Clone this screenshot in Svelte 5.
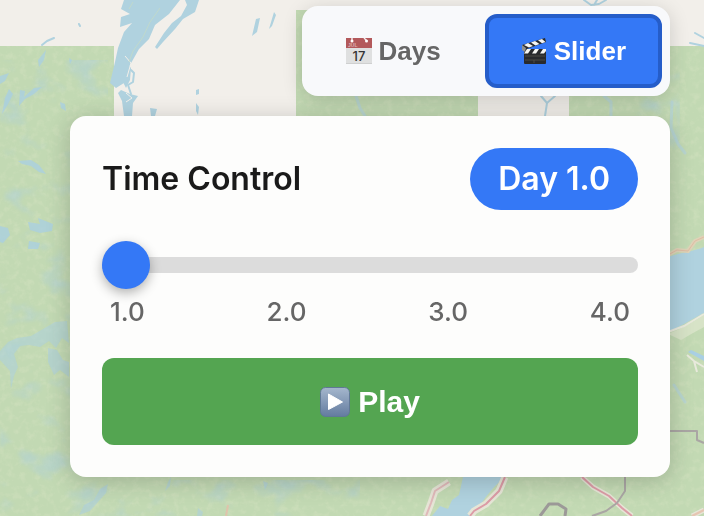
<script>
  let mode = $state('slider');
  let day = $state(1);
  const ticks = [1, 2, 3, 4];
</script>

<main class="page">
  <svg class="map" viewBox="0 0 704 516" preserveAspectRatio="xMidYMid slice" aria-hidden="true">
    <defs>
      <filter id="lakes" x="0" y="0" width="100%" height="100%" color-interpolation-filters="sRGB">
        <feTurbulence type="fractalNoise" baseFrequency="0.03 0.04" numOctaves="4" seed="21" />
        <feColorMatrix values="0 0 0 0 0.67  0 0 0 0 0.81  0 0 0 0 0.87  4 0 0 0 -2.2" />
        <feGaussianBlur stdDeviation=".8" />
        <feComposite in2="SourceGraphic" operator="in" />
      </filter>
      <filter id="grain" x="0" y="0" width="100%" height="100%" color-interpolation-filters="sRGB">
        <feTurbulence type="fractalNoise" baseFrequency="0.15" numOctaves="3" seed="4" />
        <feColorMatrix values="0 0 0 0 0.84  0 0 0 0 0.89  0 0 0 0 0.76  0 3 0 0 -1.4" />
        <feComposite in2="SourceGraphic" operator="in" />
      </filter>
      <filter id="soft" x="0" y="0" width="100%" height="100%">
        <feGaussianBlur stdDeviation=".7" />
      </filter>
    </defs>
    <rect width="704" height="516" fill="#f2efea" />
    <g fill="#c2d9b3">
      <path d="M0 46H114V116L122 200H296V10H478V150H569V46H704V516H0Z" />
    </g>
    <g filter="url(#grain)" opacity=".4">
      <path d="M0 46H114V516H0ZM296 10H478V120H296ZM569 46H704V516H569ZM60 470H600V516H60Z" />
    </g>
    <g filter="url(#lakes)" opacity=".45">
      <path d="M0 60H108V516H0ZM60 480H360V516H60ZM590 50H680V150H590Z" />
    </g>

    <g filter="url(#soft)">
      <g fill="#a9cfe3" opacity=".75">
        <path d="M0 76L9 73L5 81L0 84ZM9 89L13 94L7 106L2 114L5 98ZM20 90L25 91L24 97L34 88L42 87L34 94L25 99L19 106ZM60 102L65 104L66 111L61 108ZM18 161L31 160L39 165L46 174L39 172L31 166L22 164ZM0 226L8 228L10 235L3 243L0 242ZM28 222L40 224L38 218L53 224L52 231L40 233L30 230ZM29 241L40 243L38 249L28 249ZM69 58L72 60L70 64ZM38 60L46 50L44 60L39 67Z" />
        <path d="M0 351L8 342L17 338L31 336L43 329L55 322L67 321L69 343L62 338L56 348L49 341L40 347L29 345L20 346L14 354L18 367L14 376L11 389L10 371L0 360Z" opacity=".65" />
        <path d="M48 348L57 350L63 360L69 362V377L60 370L54 375L48 362ZM100 489L108 484L106 493L98 502L90 511L79 515L84 505L94 500ZM168 482L171 477L170 486L165 491ZM263 481L268 483L265 490ZM198 508L203 512L202 516H197Z" opacity=".7" />
      </g>

      <g fill="#b0d2df">
        <path d="M124 0L180 0L169 14L155 25L149 39L139 49L130 65L124 83L116 88L110 83L115 62L118 48L124 32L132 23L120 27L121 17L130 14L121 9Z" />
        <path d="M185 0H199L195 12L183 19L175 29L163 42L157 49L155 47L164 33L172 23L181 16L187 5Z" />
        <path d="M126 61L131 68L130 80L126 88L123 82L126 74ZM121 90L130 94L138 96L133 103L132 116H124L122 101L118 93Z" />
        <path d="M256 19L260 18L257 32L252 36ZM274 12L276 15L272 26L269 29ZM150 108L157 109L155 116H151ZM196 90L199 89L199 94L196 95ZM196 103L199 107L198 115L196 111Z" />
        <path d="M704 247C692 252 682 252 668 257V332C682 326 692 319 704 313Z" />
        <path d="M463 477H505C493 487 483 499 474 516H432L440 506L448 509L452 500L459 495Z" />
      </g>
      <g fill="none" stroke="#f2efe9" stroke-width="1">
        <path d="M125 56L131 63L127 77M126 93L132 98L126 102" />
      </g>
      <path d="M160 8L150 22L143 37L133 51L129 62M133 2L129 9" fill="none" stroke="#c0d9cc" stroke-width="1" />
      <g fill="none" stroke="#b0d2df" stroke-linecap="round" stroke-linejoin="round">
        <path d="M42 45L47 41L54 38M79 24L80 26M131 94L128 85L133 82L134 73L131 70M584 0L591 5L599 4L606 0M597 0L594 5M695 33L704 38M541 96L547 103L545 116M555 96L547 103M690 43L704 46" stroke-width="2" />
        <path d="M604 96L611 102V116M672 102L671 128L678 144L685 153M674 385L685 402M356 96L360 108L365 116" stroke-width="3" opacity=".6" />
      </g>
      <path d="M668 334C680 329 690 324 704 315V327L693 333L681 340Z" fill="#d7e3c7" />
      <path d="M668 332L684 326L704 314M687 355L694 361L704 367M694 361L697 372" fill="none" stroke="#e8e9dc" stroke-width="2" />
      <path d="M691 350L704 356V361L688 352Z" fill="#a9cfe3" />
      <g fill="none" stroke-linejoin="round">
        <path d="M668 255L677 250L688 251L695 241L704 237" stroke="#dfd3b8" stroke-width="4" />
        <path d="M668 255L677 250L688 251L695 241L704 237" stroke="#e0bda4" stroke-width="1" />
        <g stroke="#e6e5d6" stroke-width="7">
          <path d="M505 477L499 491L486 504L474 511L470 516" />
          <path d="M449 482L435 491L431 503L426 516" />
          <path d="M582 477L593 487L609 496L622 508L632 516M704 510L692 516" stroke-width="5" />
        </g>
        <g stroke="#dc9ba6" stroke-width="2">
          <path d="M505 477L499 491L486 504L474 511L470 516" />
          <path d="M449 482L435 491L431 503L426 516" opacity=".6" />
          <path d="M582 477L593 487L609 496L622 508L632 516" />
          <path d="M704 510L692 516M226 516L228 505" stroke="#e6bda9" opacity=".8" />
        </g>
        <path d="M670 431H697V440L704 443M625 477V491L617 503L606 511L592 516" stroke="#aaa6a4" stroke-width="2" />
        <path d="M540 516L549 504L558 504L566 509L565 516" stroke="#9c9998" stroke-width="3" />
      </g>
    </g>
  </svg>

  <div class="controls">
    <div class="modes" role="group" aria-label="View mode">
      <button type="button" class="mode" class:active={mode === 'days'} onclick={() => (mode = 'days')}>
        <svg class="emoji" viewBox="0 0 26 26" aria-hidden="true">
          <rect width="26" height="26" fill="#dfe0e0" />
          <rect width="26" height="10" fill="#b3595b" />
          <path d="M0 25H26V26H0Z" fill="#cfd0d0" />
          <path d="M6 0V3M18 0L21 3" stroke="#f7eeee" stroke-width="1.4" />
          <circle cx="6" cy="3" r="1.5" fill="#fff" />
          <circle cx="20.5" cy="3" r="1.5" fill="#fff" />
          <text x="2" y="9" font-family="Liberation Sans, sans-serif" font-size="5" fill="#dcb0b0">JUL</text>
          <text x="13" y="23" text-anchor="middle" font-family="Inter, sans-serif" font-size="13" font-weight="500" fill="#333">17</text>
        </svg>
        <span>Days</span>
      </button>
      <button type="button" class="mode" class:active={mode === 'slider'} onclick={() => (mode = 'slider')}>
        <svg class="emoji" viewBox="0 0 26 26" aria-hidden="true">
          <path d="M1 7L24 0L25 4L3 12Z" fill="#292a2c" />
          <path d="M3 7L7 5L12 8L8 9.5ZM10 4.500L14 3L18.500 6L14.500 7.500ZM17 2.300L21 1L24.500 4L21 5.300Z" fill="#f5f5f2" />
          <rect x="3" y="11" width="22" height="15" rx="1" fill="#292a2c" />
          <path d="M6 11H10L7 15.500H3ZM14 11H18L15 15.500H11ZM22 11H25V13L23 15.500H19Z" fill="#f5f5f2" />
          <path d="M1 7L5 10L4 14L1 12Z" fill="#8f908f" />
          <path d="M4 18H24M4 22H24M13 22V25" stroke="#55534c" stroke-width=".8" />
        </svg>
        <span>Slider</span>
      </button>
    </div>

    <section class="card" aria-labelledby="time-title">
      <header>
        <h2 id="time-title">Time Control</h2>
        <output class="pill" for="day-range">Day {day.toFixed(1)}</output>
      </header>
      <input id="day-range" type="range" min="1" max="4" step="0.1" bind:value={day} aria-labelledby="time-title" />
      <div class="ticks">
        {#each ticks as tick}
          <span>{tick.toFixed(1)}</span>
        {/each}
      </div>
      <button type="button" class="play">
        <svg class="play-icon" viewBox="0 0 30 30" aria-hidden="true">
          <defs>
            <linearGradient id="key" x1="0" y1="0" x2="0" y2="1">
              <stop offset="0" stop-color="#a5b7cd" />
              <stop offset="1" stop-color="#637b9f" />
            </linearGradient>
          </defs>
          <rect x=".5" y=".5" width="29" height="29" rx="5" fill="url(#key)" stroke="#607995" />
          <path d="M8.500 7L22.500 15L8.500 22.500Z" fill="#fff" stroke="#fff" stroke-linejoin="round" />
        </svg>
        <span>Play</span>
      </button>
    </section>
  </div>
</main>

<style>
  :global(body) {
    margin: 0;
  }

  .page {
    position: relative;
    box-sizing: border-box;
    min-height: 100vh;
    padding: 6px 34px 39px 70px;
    overflow: hidden;
    font-family: Inter, 'Liberation Sans', sans-serif;
  }

  .map {
    position: absolute;
    inset: 0;
    width: 100%;
    height: 100%;
  }

  .controls {
    position: relative;
    display: flex;
    flex-direction: column;
    gap: 20px;
  }

  .modes {
    display: flex;
    align-self: flex-end;
    gap: 8px;
    padding: 8px;
    border-radius: 16px;
    background: #f8f9fb;
    box-shadow: 0 4px 20px rgba(0, 0, 0, 0.16);
  }

  button {
    display: flex;
    align-items: center;
    justify-content: center;
    border: 0;
    font-family: 'Liberation Sans', Arial, sans-serif;
    font-weight: 700;
    cursor: pointer;
  }

  .mode {
    gap: 7px;
    padding: 18px 32px;
    border: 4px solid transparent;
    border-radius: 12px;
    background: transparent;
    color: #666;
    font-size: 26px;
    line-height: 30px;
  }

  .mode.active {
    border-color: #255dc9;
    background: #3478f6;
    color: #fff;
  }

  .emoji {
    width: 26px;
    height: 26px;
  }

  .card {
    padding: 32px;
    border-radius: 16px;
    background: #fdfdfc;
    box-shadow: 0 4px 24px rgba(0, 0, 0, 0.2);
  }

  header {
    display: flex;
    align-items: center;
    justify-content: space-between;
  }

  h2 {
    margin: 0;
    color: #1a1a1a;
    font-size: 32px;
    font-weight: 600;
    line-height: 38px;
  }

  .pill {
    padding: 12px 28px;
    border-radius: 40px;
    background: #3478f6;
    color: #fff;
    font-size: 32px;
    font-weight: 600;
    line-height: 38px;
  }

  input {
    display: block;
    width: 100%;
    height: 48px;
    margin: 31px 0 8px;
    appearance: none;
    background: transparent;
    cursor: pointer;
  }

  input::-webkit-slider-runnable-track {
    height: 16px;
    border-radius: 8px;
    background: #dcdcdc;
  }

  input::-webkit-slider-thumb {
    width: 48px;
    height: 48px;
    margin-top: -16px;
    appearance: none;
    border-radius: 50%;
    background: #3478f6;
    box-shadow: 0 4px 12px rgba(0, 0, 0, 0.3);
  }

  .ticks {
    display: flex;
    justify-content: space-between;
    padding: 0 8px;
    color: #666;
    font-size: 26px;
    font-weight: 500;
    line-height: 30px;
  }

  .play {
    width: 100%;
    margin-top: 31px;
    gap: 8px;
    padding: 26px;
    border-radius: 12px;
    background: #54a551;
    color: #fff;
    font-size: 30px;
    line-height: 35px;
  }

  .play-icon {
    width: 30px;
    height: 30px;
  }
</style>
